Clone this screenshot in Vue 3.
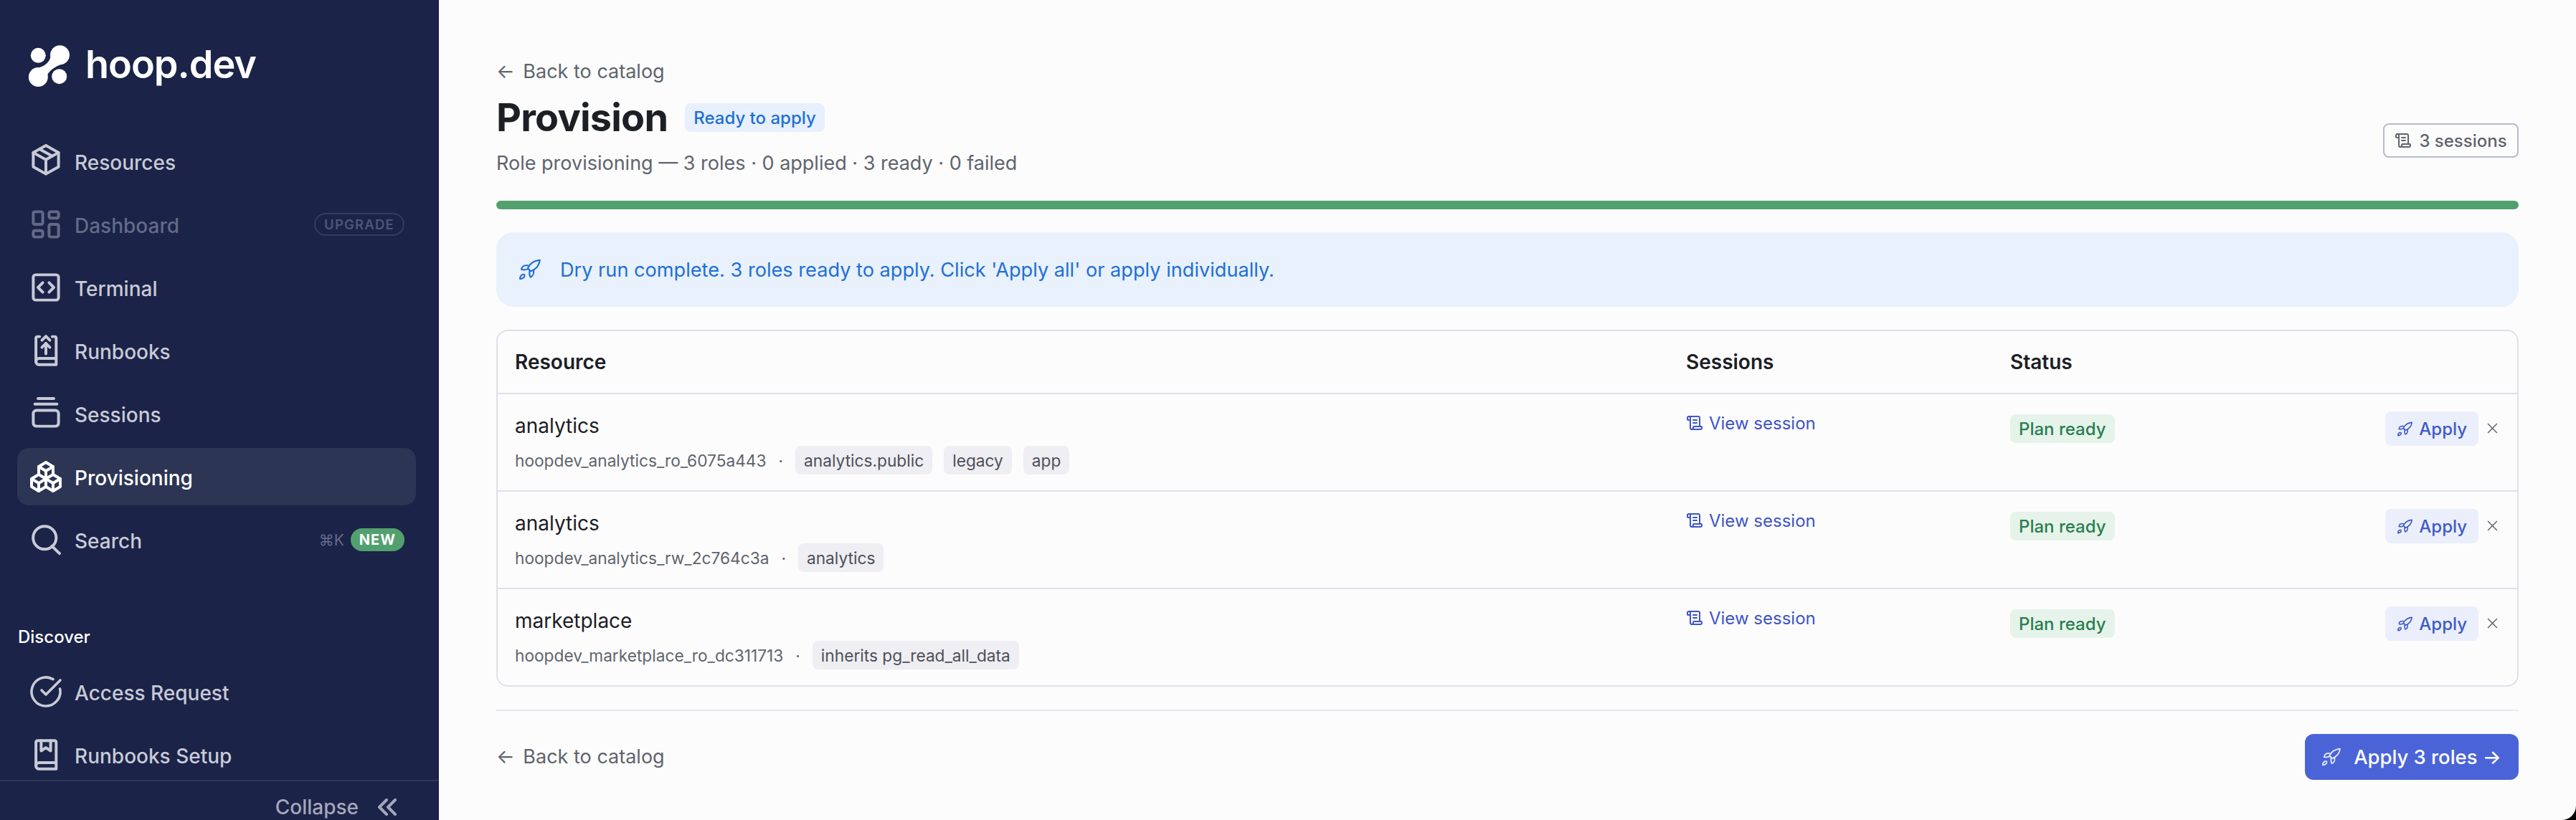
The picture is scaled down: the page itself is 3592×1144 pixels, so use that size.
<template>
  <div class="layout">
    <aside class="sidebar">
      <div class="brand">
        <svg class="brand-mark" viewBox="0 0 57 58" fill="#fff">
          <circle cx="13.3" cy="14.3" r="10.5" />
          <circle cx="43.5" cy="13.7" r="13.5" />
          <circle cx="13.3" cy="44.5" r="13.5" />
          <circle cx="42.7" cy="43.7" r="10.5" />
          <path d="M31.5 8C32 20 26 30 8 33L24 52C24 40 30 32 50 25Z" />
        </svg>
        <span class="brand-name">hoop.dev</span>
      </div>

      <nav class="nav">
        <a v-for="item in mainNav" :key="item.label" class="nav-item"
          :class="{ active: item.active, disabled: item.disabled }">
          <svg class="nav-icon" :viewBox="item.box || boxTight" fill="none" stroke="currentColor"
            :stroke-width="item.stroke || 1.8" stroke-linecap="round" stroke-linejoin="round">
            <path v-for="d in item.paths" :key="d" :d="d" />
          </svg>
          <span class="nav-label">{{ item.label }}</span>
          <span v-if="item.upgrade" class="upgrade-pill">UPGRADE</span>
          <template v-if="item.shortcut">
            <span class="shortcut">{{ item.shortcut }}</span>
            <span class="new-pill">NEW</span>
          </template>
        </a>

        <div class="nav-section">Discover</div>

        <a v-for="item in discoverNav" :key="item.label" class="nav-item">
          <svg class="nav-icon" :viewBox="item.box || boxTight" fill="none" stroke="currentColor"
            :stroke-width="item.stroke || 1.8" stroke-linecap="round" stroke-linejoin="round">
            <path v-for="d in item.paths" :key="d" :d="d" />
          </svg>
          <span class="nav-label">{{ item.label }}</span>
        </a>
      </nav>

      <div class="sidebar-foot">
        <span>Collapse</span>
        <svg class="collapse-icon" viewBox="5 6 13 12" fill="none" stroke="currentColor" stroke-width="2"
          stroke-linecap="round" stroke-linejoin="round">
          <path d="M11 7l-5 5l5 5" />
          <path d="M17 7l-5 5l5 5" />
        </svg>
      </div>
    </aside>

    <main class="main">
      <a class="back-link"><span class="back-arrow">←</span> Back to catalog</a>

      <header class="page-head">
        <div>
          <div class="title-row">
            <h1>Provision</h1>
            <span class="state-badge">Ready to apply</span>
          </div>
          <p class="summary">Role provisioning — 3 roles · 0 applied · 3 ready · 0 failed</p>
        </div>
        <button class="sessions-btn">
          <svg class="scroll-icon" viewBox="0 0 24 24" fill="none" stroke="currentColor" stroke-width="2"
            stroke-linecap="round" stroke-linejoin="round">
            <path v-for="d in scrollPaths" :key="d" :d="d" />
          </svg>
          3 sessions
        </button>
      </header>

      <div class="progress"></div>

      <div class="callout">
        <svg class="callout-icon" viewBox="0 0 24 24" fill="none" stroke="currentColor" stroke-width="1.7"
          stroke-linecap="round" stroke-linejoin="round">
          <path v-for="d in rocketPaths" :key="d" :d="d" />
        </svg>
        <span>Dry run complete. 3 roles ready to apply. Click 'Apply all' or apply individually.</span>
      </div>

      <section class="table">
        <div class="row head">
          <div>Resource</div>
          <div>Sessions</div>
          <div>Status</div>
          <div></div>
        </div>
        <div v-for="row in roles" :key="row.role" class="row">
          <div>
            <div class="res-name">{{ row.name }}</div>
            <div class="res-meta">
              <span>{{ row.role }}</span>
              <span class="dot">·</span>
              <span v-for="tag in row.tags" :key="tag" class="tag">{{ tag }}</span>
            </div>
          </div>
          <div>
            <a class="session-link">
              <svg class="scroll-icon" viewBox="0 0 24 24" fill="none" stroke="currentColor" stroke-width="2"
                stroke-linecap="round" stroke-linejoin="round">
                <path v-for="d in scrollPaths" :key="d" :d="d" />
              </svg>
              View session
            </a>
          </div>
          <div>
            <span class="plan-badge">Plan ready</span>
          </div>
          <div class="actions">
            <button class="apply-btn">
              <svg class="apply-icon" viewBox="0 0 24 24" fill="none" stroke="currentColor" stroke-width="1.9"
                stroke-linecap="round" stroke-linejoin="round">
                <path v-for="d in rocketPaths" :key="d" :d="d" />
              </svg>
              Apply
            </button>
            <svg class="remove-icon" viewBox="0 0 14 14" fill="none" stroke="currentColor" stroke-width="1.4">
              <path d="M1 1l12 12M13 1L1 13" />
            </svg>
          </div>
        </div>
      </section>

      <footer class="page-foot">
        <a class="back-link foot-link"><span class="back-arrow">←</span> Back to catalog</a>
        <button class="primary-btn">
          <svg class="primary-icon" viewBox="0 0 24 24" fill="none" stroke="currentColor" stroke-width="1.7"
            stroke-linecap="round" stroke-linejoin="round">
            <path v-for="d in rocketPaths" :key="d" :d="d" />
          </svg>
          Apply 3 roles →
        </button>
      </footer>
    </main>
  </div>
</template>

<script setup>
const boxTight = '1.1 1.1 21.8 21.8'

const rocketPaths = [
  'M23 1.5C17 2 12 5 9.5 10.5L13 14C19 11.5 22.5 7 23 1.5Z',
  'M9.5 7.5C6 7 3 8 2.5 12C4.5 12.5 7 12.5 9.5 11.5',
  'M16 13C16.5 16 15.5 19.5 12.5 20.5C11.5 18.5 11 16 11.5 13.5',
  'M2.5 18.5C3.8 17 6 17 6 19S3 22.5 1 22.5C.7 21.1 1.2 19.5 2.5 18.5Z',
]

const scrollPaths = [
  'M15 12h-5',
  'M15 8h-5',
  'M19 17V5a2 2 0 0 0-2-2H4',
  'M8 21h12a2 2 0 0 0 2-2v-1a1 1 0 0 0-1-1H11a1 1 0 0 0-1 1v1a2 2 0 1 1-4 0V5a2 2 0 1 0-4 0v2a1 1 0 0 0 1 1h3',
]

const mainNav = [
  {
    label: 'Resources',
    paths: [
      'M12 2l8 4.5v9L12 20l-8-4.5v-9L12 2',
      'M12 11l8-4.5',
      'M12 11v9',
      'M12 11L4 6.5',
      'M8 4.25l8 4.5',
    ],
  },
  {
    label: 'Dashboard',
    disabled: true,
    upgrade: true,
    paths: [
      'M5 4h4a1 1 0 0 1 1 1v6a1 1 0 0 1-1 1H5a1 1 0 0 1-1-1V5a1 1 0 0 1 1-1',
      'M5 16h4a1 1 0 0 1 1 1v2a1 1 0 0 1-1 1H5a1 1 0 0 1-1-1v-2a1 1 0 0 1 1-1',
      'M15 12h4a1 1 0 0 1 1 1v6a1 1 0 0 1-1 1h-4a1 1 0 0 1-1-1v-6a1 1 0 0 1 1-1',
      'M15 4h4a1 1 0 0 1 1 1v2a1 1 0 0 1-1 1h-4a1 1 0 0 1-1-1V5a1 1 0 0 1 1-1',
    ],
  },
  {
    label: 'Terminal',
    paths: [
      'M5.5 4h13A1.5 1.5 0 0 1 20 5.5v13a1.5 1.5 0 0 1-1.5 1.5h-13A1.5 1.5 0 0 1 4 18.5v-13A1.5 1.5 0 0 1 5.5 4',
      'M10 9l-3 3l3 3',
      'M14 9l3 3l-3 3',
    ],
  },
  {
    label: 'Runbooks',
    paths: [
      'M8 3.2H6.7a1 1 0 0 0-1 1V19a2 2 0 0 0 2 2h10.8V4.2a1 1 0 0 0-1-1H16',
      'M5.7 19a2 2 0 0 1 2-2h10.8',
      'M12 14V7.5',
      'M9.5 10L12 7.5L14.5 10',
      'M9.5 5.5L12 3L14.5 5.5',
    ],
  },
  {
    label: 'Sessions',
    paths: [
      'M7 2.5h10',
      'M5 6h14',
      'M6 10h12a2 2 0 0 1 2 2v6a2 2 0 0 1-2 2H6a2 2 0 0 1-2-2v-6a2 2 0 0 1 2-2',
    ],
  },
  {
    label: 'Provisioning',
    active: true,
    box: '0 0 24 24',
    stroke: 2,
    paths: [
      'M7 16.5l-5-3l5-3l5 3v5.5l-5 3z',
      'M2 13.5V19l5 3',
      'M7 16.545l5-3.03',
      'M17 16.5l-5-3l5-3l5 3V19l-5 3z',
      'M12 19l5 3',
      'M17 16.5l5-3',
      'M12 13.5V8L7 5l5-3l5 3v5.5',
      'M7 5.03v5.455',
      'M12 8l5-3',
    ],
  },
  {
    label: 'Search',
    shortcut: '⌘K',
    paths: [
      'M18.5 10.75a7.3 7.3 0 1 1-14.6 0a7.3 7.3 0 0 1 14.6 0',
      'M15.8 16l4.8 4.7',
    ],
  },
]

const discoverNav = [
  {
    label: 'Access Request',
    box: '0 0 24 24',
    stroke: 1.8,
    paths: ['M21.801 10A10 10 0 1 1 17 3.335', 'M9 11l3 3L22 4'],
  },
  {
    label: 'Runbooks Setup',
    paths: [
      'M6.7 3h10.8a1 1 0 0 1 1 1v17H7.7a2 2 0 0 1-2-2V4a1 1 0 0 1 1-1',
      'M5.7 19a2 2 0 0 1 2-2h10.8',
      'M9 3v6.5l3-2l3 2V3',
    ],
  },
]

const roles = [
  {
    name: 'analytics',
    role: 'hoopdev_analytics_ro_6075a443',
    tags: ['analytics.public', 'legacy', 'app'],
  },
  {
    name: 'analytics',
    role: 'hoopdev_analytics_rw_2c764c3a',
    tags: ['analytics'],
  },
  {
    name: 'marketplace',
    role: 'hoopdev_marketplace_ro_dc311713',
    tags: ['inherits pg_read_all_data'],
  },
]
</script>

<style>
body {
  background: #000;
}
</style>

<style scoped>
.layout {
  display: flex;
  width: 3592px;
  height: 1144px;
  overflow: hidden;
  border-bottom-right-radius: 20px;
  background: #fcfcfd;
  font-family: Inter, "Noto Sans", sans-serif;
  color: #1c2024;
}

.sidebar {
  width: 612px;
  flex-shrink: 0;
  display: flex;
  flex-direction: column;
  background: #1b2348;
  color: #c8cad6;
}

.brand {
  height: 185px;
  flex-shrink: 0;
  display: flex;
  align-items: flex-start;
  padding: 63px 0 0 40px;
  box-sizing: border-box;
}

.brand-mark {
  width: 57px;
  height: 58px;
}

.brand-name {
  margin: -8px 0 0 22px;
  font-size: 54px;
  line-height: 70px;
  font-weight: 600;
  letter-spacing: -1px;
  color: #fff;
}

.nav {
  flex: 1;
  min-height: 0;
  overflow: hidden;
  padding: 0 32px 0 24px;
  display: flex;
  flex-direction: column;
  gap: 8px;
}

.nav-item {
  flex-shrink: 0;
  height: 80px;
  box-sizing: border-box;
  display: flex;
  align-items: center;
  gap: 16px;
  padding: 0 16px 0 16px;
  border-radius: 16px;
  font-size: 28px;
  font-weight: 500;
}

.nav-label {
  flex: 1;
  padding-top: 3px;
}

.nav-item.active {
  background: #2d3554;
  color: #fff;
}

.nav-item.disabled {
  color: #646a86;
}

.nav-icon {
  width: 48px;
  height: 48px;
  flex-shrink: 0;
}

.upgrade-pill {
  height: 32px;
  box-sizing: border-box;
  display: flex;
  align-items: center;
  padding: 0 12px;
  border: 2px solid #353c5e;
  border-radius: 16px;
  font-size: 18.5px;
  font-weight: 600;
  letter-spacing: 1.2px;
  color: #505673;
}

.shortcut {
  font-size: 21px;
  font-weight: 400;
  color: #666c8a;
  margin-right: -7px;
}

.new-pill {
  height: 32px;
  display: flex;
  align-items: center;
  padding: 0 12px;
  border-radius: 16px;
  background: #53a06f;
  color: #fff;
  font-size: 20px;
  font-weight: 700;
  letter-spacing: 1px;
}

.nav-section {
  flex-shrink: 0;
  margin: 72px 0 12px;
  padding-left: 1px;
  font-size: 24px;
  line-height: 32px;
  font-weight: 500;
  color: #fff;
}

.sidebar-foot {
  height: 56px;
  flex-shrink: 0;
  box-sizing: border-box;
  border-top: 2px solid #2f3658;
  display: flex;
  align-items: center;
  justify-content: flex-end;
  gap: 26px;
  padding: 18px 58px 0 0;
  font-size: 28px;
  font-weight: 500;
  color: #a3a7bb;
}

.collapse-icon {
  width: 28px;
  height: 24px;
}

.main {
  flex: 1;
  min-width: 0;
  padding: 80px 80px 0;
  display: flex;
  flex-direction: column;
}

.back-link {
  font-size: 27px;
  line-height: 40px;
  color: #60646c;
}

.back-arrow {
  margin-right: 4px;
}

.page-head {
  display: flex;
  align-items: center;
  justify-content: space-between;
  margin-top: 24px;
}

.title-row {
  display: flex;
  align-items: center;
  gap: 24px;
}

h1 {
  margin: 0;
  font-size: 54px;
  line-height: 40px;
  font-weight: 700;
  letter-spacing: -0.8px;
}

.state-badge {
  height: 40px;
  padding: 0 12px;
  display: flex;
  align-items: center;
  border-radius: 8px;
  background: #e7f0fc;
  color: #1f6fd6;
  font-size: 24px;
  font-weight: 500;
}

.summary {
  margin: 24px 0 0;
  font-size: 27px;
  line-height: 40px;
  color: #60646c;
}

.sessions-btn {
  width: 189px;
  height: 48px;
  box-sizing: border-box;
  display: flex;
  align-items: center;
  justify-content: center;
  gap: 10px;
  padding: 0;
  background: none;
  border: 2px solid #b9bacb;
  border-radius: 8px;
  font: inherit;
  font-size: 24px;
  font-weight: 500;
  color: #60646c;
}

.scroll-icon {
  width: 24px;
  height: 24px;
  flex-shrink: 0;
}

.progress {
  height: 12px;
  flex-shrink: 0;
  margin-top: 32px;
  border-radius: 6px;
  background: #53a06f;
}

.callout {
  height: 104px;
  flex-shrink: 0;
  margin-top: 32px;
  padding: 0 32px;
  display: flex;
  align-items: center;
  gap: 27px;
  border-radius: 24px;
  background: #e8f1fc;
  color: #1f6fd6;
  font-size: 27.15px;
}

.callout-icon {
  width: 30px;
  height: 30px;
  flex-shrink: 0;
}

.table {
  flex-shrink: 0;
  margin-top: 32px;
  border: 2px solid #e0e0e8;
  border-radius: 16px;
  overflow: hidden;
}

.row {
  display: grid;
  grid-template-columns: 1633px 452px 1fr auto;
  padding-bottom: 22px;
  padding-top: 24px;
  border-top: 2px solid #e0e0e8;
}

.row > div {
  padding-left: 24px;
  min-width: 0;
}

.row > div:empty {
  display: none;
}

.row.head {
  border-top: none;
  height: 86px;
  box-sizing: border-box;
  padding: 0;
  align-items: center;
  font-size: 28px;
  font-weight: 600;
}

.res-name {
  font-size: 28px;
  line-height: 40px;
  font-weight: 400;
}

.res-meta {
  margin-top: 8px;
  display: flex;
  align-items: center;
  gap: 16px;
  font-size: 22.7px;
  color: #60646c;
}

.dot {
  margin: 0 1px;
}

.tag {
  height: 40px;
  padding: 0 12px;
  display: flex;
  align-items: center;
  border-radius: 8px;
  background: #eeeef3;
  color: #4e5058;
}

.session-link {
  display: inline-flex;
  align-items: center;
  gap: 8px;
  height: 32px;
  font-size: 24px;
  color: #3e55c5;
}

.plan-badge {
  display: inline-flex;
  align-items: center;
  height: 40px;
  margin-top: 4px;
  padding: 0 12px;
  border-radius: 8px;
  background: #e6f3ea;
  color: #2a7e4f;
  font-size: 24px;
  font-weight: 500;
}

.actions {
  display: flex;
  justify-content: flex-end;
  align-items: flex-start;
  gap: 12px;
  padding-right: 27px;
}

.apply-btn {
  height: 48px;
  padding: 0 16px 0 17px;
  display: flex;
  align-items: center;
  gap: 9px;
  border: none;
  border-radius: 8px;
  background: #ebeffc;
  font: inherit;
  font-size: 24px;
  font-weight: 500;
  color: #3f5bc8;
}

.apply-icon {
  width: 21px;
  height: 21px;
}

.remove-icon {
  width: 15px;
  height: 15px;
  margin-top: 16px;
  color: #60646c;
}

.page-foot {
  flex-shrink: 0;
  margin-top: 32px;
  padding-top: 32px;
  border-top: 2px solid #e8e8f0;
  display: flex;
  align-items: center;
  justify-content: space-between;
}

.primary-btn {
  width: 298px;
  height: 64px;
  display: flex;
  align-items: center;
  justify-content: center;
  gap: 18px;
  padding: 0;
  border: none;
  border-radius: 12px;
  background: #4a64d8;
  font: inherit;
  font-size: 27.4px;
  font-weight: 500;
  color: #fff;
}

.primary-icon {
  width: 26px;
  height: 26px;
  color: #e6e9fa;
}
</style>
